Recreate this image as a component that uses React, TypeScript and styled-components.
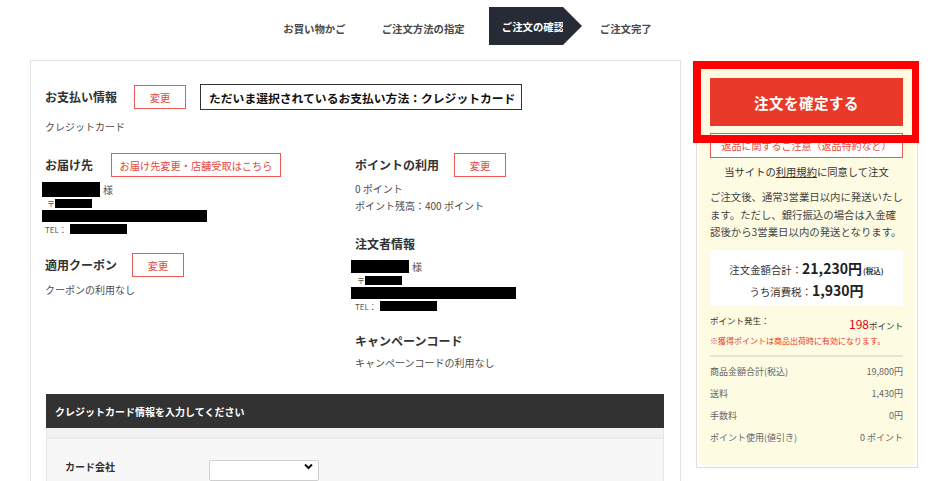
import React from 'react';
import styled, { createGlobalStyle } from 'styled-components';

const Global = createGlobalStyle`
  html, body { margin: 0; padding: 0; background: #fff; overflow: hidden; }
  body { font-family: "Noto Sans CJK JP", "Noto Sans", sans-serif; color: #333; }
  * { box-sizing: border-box; }
`;

const Page = styled.div`
  width: 940px;
  height: 481px;
  overflow: hidden;
`;

/* ---------- step navigation ---------- */
const StepNav = styled.nav`
  display: flex;
  justify-content: center;
  align-items: center;
  height: 52px;
  padding: 7px 5px 7px 0;
`;

const Step = styled.div<{ $gap: number }>`
  font-size: 10.4px;
  font-weight: 700;
  color: #4a4a4a;
  white-space: nowrap;
  padding-top: 4px;
  margin-right: ${p => p.$gap}px;
`;

const ActiveStep = styled.div`
  position: relative;
  height: 38px;
  width: 74px;
  padding-left: 13px;
  display: flex;
  align-items: center;
  background: #262b36;
  color: #fff;
  font-size: 10.4px;
  font-weight: 700;
  white-space: nowrap;
  margin-right: 37px;
  &::after {
    content: "";
    position: absolute;
    top: 0;
    right: -19px;
    border-left: 19px solid #262b36;
    border-top: 19px solid transparent;
    border-bottom: 19px solid transparent;
  }
`;

/* ---------- main layout ---------- */
const Main = styled.div`
  display: flex;
  align-items: flex-start;
  gap: 15px;
  padding-left: 30px;
  margin-top: 8px;
`;

const LeftPanel = styled.section`
  width: 651px;
  min-height: 520px;
  border: 1px solid #e2e2e2;
  padding: 23px 16px 0 14px;
`;

const HeadRow = styled.div`
  display: flex;
  align-items: center;
  height: 24px;
`;

const PayRow = styled.div`
  display: flex;
  align-items: center;
  height: 26px;
`;

const SectionTitle = styled.h3<{ $mr?: number }>`
  margin: 0 ${p => p.$mr ?? 17}px 0 0;
  font-size: 12px;
  line-height: 18px;
  font-weight: 700;
  color: #333;
  white-space: nowrap;
`;

const OutlineBtn = styled.button<{ $w: number }>`
  width: ${p => p.$w}px;
  height: 24px;
  border: 1px solid #ea5a52;
  background: #fff;
  color: #e5483d;
  font-family: inherit;
  font-size: 10.2px;
  padding: 0;
  cursor: pointer;
`;

const SelectedBox = styled.div`
  margin-left: 14px;
  height: 26px;
  display: flex;
  align-items: center;
  border: 1px solid #333;
  padding: 0 6px 0 8px;
  font-size: 11.8px;
  font-weight: 700;
  color: #111;
  white-space: nowrap;
`;

const BodyText = styled.p<{ $mt?: number }>`
  margin: ${p => p.$mt ?? 0}px 0 0;
  font-size: 10px;
  line-height: 16px;
  color: #4d4d4d;
  white-space: nowrap;
`;

const TwoCol = styled.div`
  display: grid;
  grid-template-columns: 310px 1fr;
  margin-top: 18px;
`;

const Col = styled.div`
  display: flex;
  flex-direction: column;
`;

const Block = styled.div<{ $mt: number }>`
  margin-top: ${p => p.$mt}px;
`;

const TitleLine = styled.h3<{ $mt: number }>`
  margin: ${p => p.$mt}px 0 0;
  font-size: 12px;
  line-height: 18px;
  font-weight: 700;
  color: #333;
`;

const Contact = styled.div<{ $mt: number; $shift: number; $gap: number }>`
  display: flex;
  flex-direction: column;
  gap: ${p => p.$gap}px;
  margin-top: ${p => p.$mt}px;
  margin-left: ${p => p.$shift}px;
`;

const ContactLine = styled.div<{ $h: number }>`
  display: flex;
  align-items: center;
  height: ${p => p.$h}px;
`;

const Redact = styled.span<{ $w: number; $h: number }>`
  display: inline-block;
  width: ${p => p.$w}px;
  height: ${p => p.$h}px;
  background: #000;
`;

const Tiny = styled.span<{ $ml: number; $mr: number }>`
  font-size: 8px;
  color: #555;
  margin: 0 ${p => p.$mr}px 0 ${p => p.$ml}px;
  white-space: nowrap;
`;

const Sama = styled.span`
  font-size: 10px;
  color: #555;
  margin-left: 3px;
`;

/* ---------- credit card ---------- */
const CardSection = styled.div`
  margin-top: 23px;
  margin-left: 1px;
`;

const CardHeader = styled.div`
  height: 34px;
  display: flex;
  align-items: center;
  padding-left: 9px;
  background: #323232;
  color: #fff;
  font-size: 10px;
  font-weight: 700;
`;

const CardBody = styled.div`
  background: #f7f7f7;
  border-left: 1px solid #e6e6e6;
  border-right: 1px solid #e6e6e6;
  min-height: 120px;
`;

const CardStrip = styled.div`
  height: 11px;
  background: #f2f2f2;
  border-bottom: 2px solid #ececec;
`;

const CardRow = styled.div`
  display: flex;
  align-items: center;
  padding: 17px 0 0 18px;
`;

const CardLabel = styled.span`
  width: 144px;
  font-size: 10px;
  font-weight: 700;
  color: #333;
`;

const SelectWrap = styled.div`
  position: relative;
  width: 110px;
  height: 21px;
`;

const Select = styled.select`
  appearance: none;
  width: 100%;
  height: 100%;
  border: 1px solid #cfcfcf;
  border-radius: 2px;
  background: #fff;
  font-family: inherit;
  font-size: 10px;
`;

const Chevron = styled.svg`
  position: absolute;
  right: 6px;
  top: 7px;
  pointer-events: none;
`;

/* ---------- sidebar ---------- */
const Sidebar = styled.aside`
  position: relative;
  width: 222px;
  border: 1px solid #dedede;
  background: #fff;
  padding: 2px;
  margin-top: 1px;
`;

const SideInner = styled.div`
  background: #fefbe3;
  padding: 14px 12px 16px 11px;
  display: flex;
  flex-direction: column;
`;

const ConfirmBtn = styled.button`
  height: 48px;
  border: none;
  background: #e8392b;
  color: #fff;
  font-family: inherit;
  font-size: 14.5px;
  font-weight: 700;
  letter-spacing: 0.5px;
  cursor: pointer;
`;

const ReturnLink = styled.a`
  margin-top: 7px;
  height: 25px;
  display: flex;
  align-items: center;
  justify-content: center;
  border: 1px solid #ea5a52;
  background: #fff;
  color: #e5483d;
  font-size: 10px;
  text-decoration: none;
`;

const Agree = styled.p`
  margin: 5px 0 0;
  text-align: center;
  font-size: 10.3px;
  line-height: 18px;
  color: #333;
`;

const Underline = styled.span`
  text-decoration: underline;
`;

const Notice = styled.p`
  margin: 7px 0 0;
  font-size: 10.4px;
  line-height: 17.5px;
  color: #444;
`;

const TotalBox = styled.div`
  margin-top: 9px;
  background: #fff;
  padding: 7px 0 5px;
  display: flex;
  flex-direction: column;
  align-items: center;
`;

const TotalLine = styled.div`
  height: 22px;
  display: flex;
  align-items: baseline;
  justify-content: center;
  font-size: 10.4px;
  color: #333;
  line-height: 22px;
`;

const Big = styled.strong`
  font-size: 14px;
  font-weight: 700;
  color: #222;
`;

const Tax = styled.span`
  font-size: 7.5px;
  font-weight: 700;
  margin-left: 1px;
`;

const PointRow = styled.div`
  margin-top: 5px;
  display: flex;
  justify-content: space-between;
  align-items: flex-start;
`;

const PointLabel = styled.span`
  font-size: 8.5px;
  line-height: 18px;
  color: #333;
`;

const PointValue = styled.span`
  margin-top: 4px;
  font-size: 8.5px;
  line-height: 18px;
  color: #333;
`;

const RedNum = styled.span`
  font-size: 12px;
  color: #e60012;
`;

const PointNote = styled.p`
  margin: 1px 0 0;
  font-size: 8px;
  line-height: 12px;
  color: #e8372b;
  white-space: nowrap;
`;

const Divider = styled.hr`
  margin: 8px 0 0;
  border: none;
  height: 2px;
  background: #e6e4d6;
`;

const Breakdown = styled.dl`
  margin: 4px 0 0;
`;

const BreakRow = styled.div`
  display: flex;
  justify-content: space-between;
  height: 22px;
  align-items: center;
  font-size: 9px;
  color: #666;
`;

const Dt = styled.dt``;
const Dd = styled.dd`
  margin: 0;
`;

const Annotation = styled.div`
  position: absolute;
  left: -4px;
  top: -1px;
  width: 226px;
  height: 82px;
  border: 8px solid #ff0000;
  border-right-width: 7px;
  pointer-events: none;
`;

const breakdown: [string, string][] = [
  ['商品金額合計(税込)', '19,800円'],
  ['送料', '1,430円'],
  ['手数料', '0円'],
  ['ポイント使用(値引き)', '0 ポイント'],
];

export default function App() {
  return (
    <Page>
      <Global />
      <StepNav>
        <Step $gap={36}>お買い物かご</Step>
        <Step $gap={24}>ご注文方法の指定</Step>
        <ActiveStep>ご注文の確認</ActiveStep>
        <Step $gap={0}>ご注文完了</Step>
      </StepNav>

      <Main>
        <LeftPanel>
          <PayRow>
            <SectionTitle>お支払い情報</SectionTitle>
            <OutlineBtn $w={52}>変更</OutlineBtn>
            <SelectedBox>ただいま選択されているお支払い方法：クレジットカード</SelectedBox>
          </PayRow>
          <BodyText $mt={9}>クレジットカード</BodyText>

          <TwoCol>
            <Col>
              <HeadRow>
                <SectionTitle $mr={18}>お届け先</SectionTitle>
                <OutlineBtn $w={170}>お届け先変更・店舗受取はこちら</OutlineBtn>
              </HeadRow>
              <Contact $mt={5} $shift={-3} $gap={2}>
                <ContactLine $h={15}>
                  <Redact $w={58} $h={15} />
                  <Sama>様</Sama>
                </ContactLine>
                <ContactLine $h={9}>
                  <Tiny $ml={5} $mr={0}>〒</Tiny>
                  <Redact $w={37} $h={9} />
                </ContactLine>
                <ContactLine $h={12}>
                  <Redact $w={165} $h={12} />
                </ContactLine>
                <ContactLine $h={10}>
                  <Tiny $ml={3} $mr={3}>TEL：</Tiny>
                  <Redact $w={57} $h={10} />
                </ContactLine>
              </Contact>

              <Block $mt={19}>
                <HeadRow>
                  <SectionTitle $mr={15}>適用クーポン</SectionTitle>
                  <OutlineBtn $w={52}>変更</OutlineBtn>
                </HeadRow>
                <BodyText $mt={5}>クーポンの利用なし</BodyText>
              </Block>
            </Col>

            <Col>
              <HeadRow>
                <SectionTitle $mr={15}>ポイントの利用</SectionTitle>
                <OutlineBtn $w={52}>変更</OutlineBtn>
              </HeadRow>
              <BodyText $mt={4}>0 ポイント</BodyText>
              <BodyText $mt={1}>ポイント残高：400 ポイント</BodyText>

              <TitleLine $mt={21}>注文者情報</TitleLine>
              <Contact $mt={7} $shift={-4} $gap={2}>
                <ContactLine $h={13}>
                  <Redact $w={58} $h={13} />
                  <Sama>様</Sama>
                </ContactLine>
                <ContactLine $h={10}>
                  <Tiny $ml={6} $mr={0}>〒</Tiny>
                  <Redact $w={37} $h={9} />
                </ContactLine>
                <ContactLine $h={12}>
                  <Redact $w={165} $h={12} />
                </ContactLine>
                <ContactLine $h={10}>
                  <Tiny $ml={4} $mr={3}>TEL：</Tiny>
                  <Redact $w={57} $h={10} />
                </ContactLine>
              </Contact>

              <TitleLine $mt={21}>キャンペーンコード</TitleLine>
              <BodyText $mt={5}>キャンペーンコードの利用なし</BodyText>
            </Col>
          </TwoCol>

          <CardSection>
            <CardHeader>クレジットカード情報を入力してください</CardHeader>
            <CardBody>
              <CardStrip />
              <CardRow>
                <CardLabel>カード会社</CardLabel>
                <SelectWrap>
                  <Select defaultValue="">
                    <option value=""></option>
                  </Select>
                  <Chevron width="9" height="7" viewBox="0 0 9 7">
                    <path d="M1 1.5 L4.5 5 L8 1.5" fill="none" stroke="#111" strokeWidth="2" />
                  </Chevron>
                </SelectWrap>
              </CardRow>
            </CardBody>
          </CardSection>
        </LeftPanel>

        <Sidebar>
          <SideInner>
            <ConfirmBtn>注文を確定する</ConfirmBtn>
            <ReturnLink>返品に関するご注意（返品特約など）</ReturnLink>
            <Agree>
              当サイトの<Underline>利用規約</Underline>に同意して注文
            </Agree>
            <Notice>
              ご注文後、通常3営業日以内に発送いたします。ただし、銀行振込の場合は入金確認後から3営業日以内の発送となります。
            </Notice>
            <TotalBox>
              <TotalLine>
                注文金額合計：<Big>21,230円</Big>
                <Tax>(税込)</Tax>
              </TotalLine>
              <TotalLine>
                うち消費税：<Big>1,930円</Big>
              </TotalLine>
            </TotalBox>
            <PointRow>
              <PointLabel>ポイント発生：</PointLabel>
              <PointValue>
                <RedNum>198</RedNum>ポイント
              </PointValue>
            </PointRow>
            <PointNote>※獲得ポイントは商品出荷時に有効になります。</PointNote>
            <Divider />
            <Breakdown>
              {breakdown.map(([k, v]) => (
                <BreakRow key={k}>
                  <Dt>{k}</Dt>
                  <Dd>{v}</Dd>
                </BreakRow>
              ))}
            </Breakdown>
          </SideInner>
          <Annotation />
        </Sidebar>
      </Main>
    </Page>
  );
}
